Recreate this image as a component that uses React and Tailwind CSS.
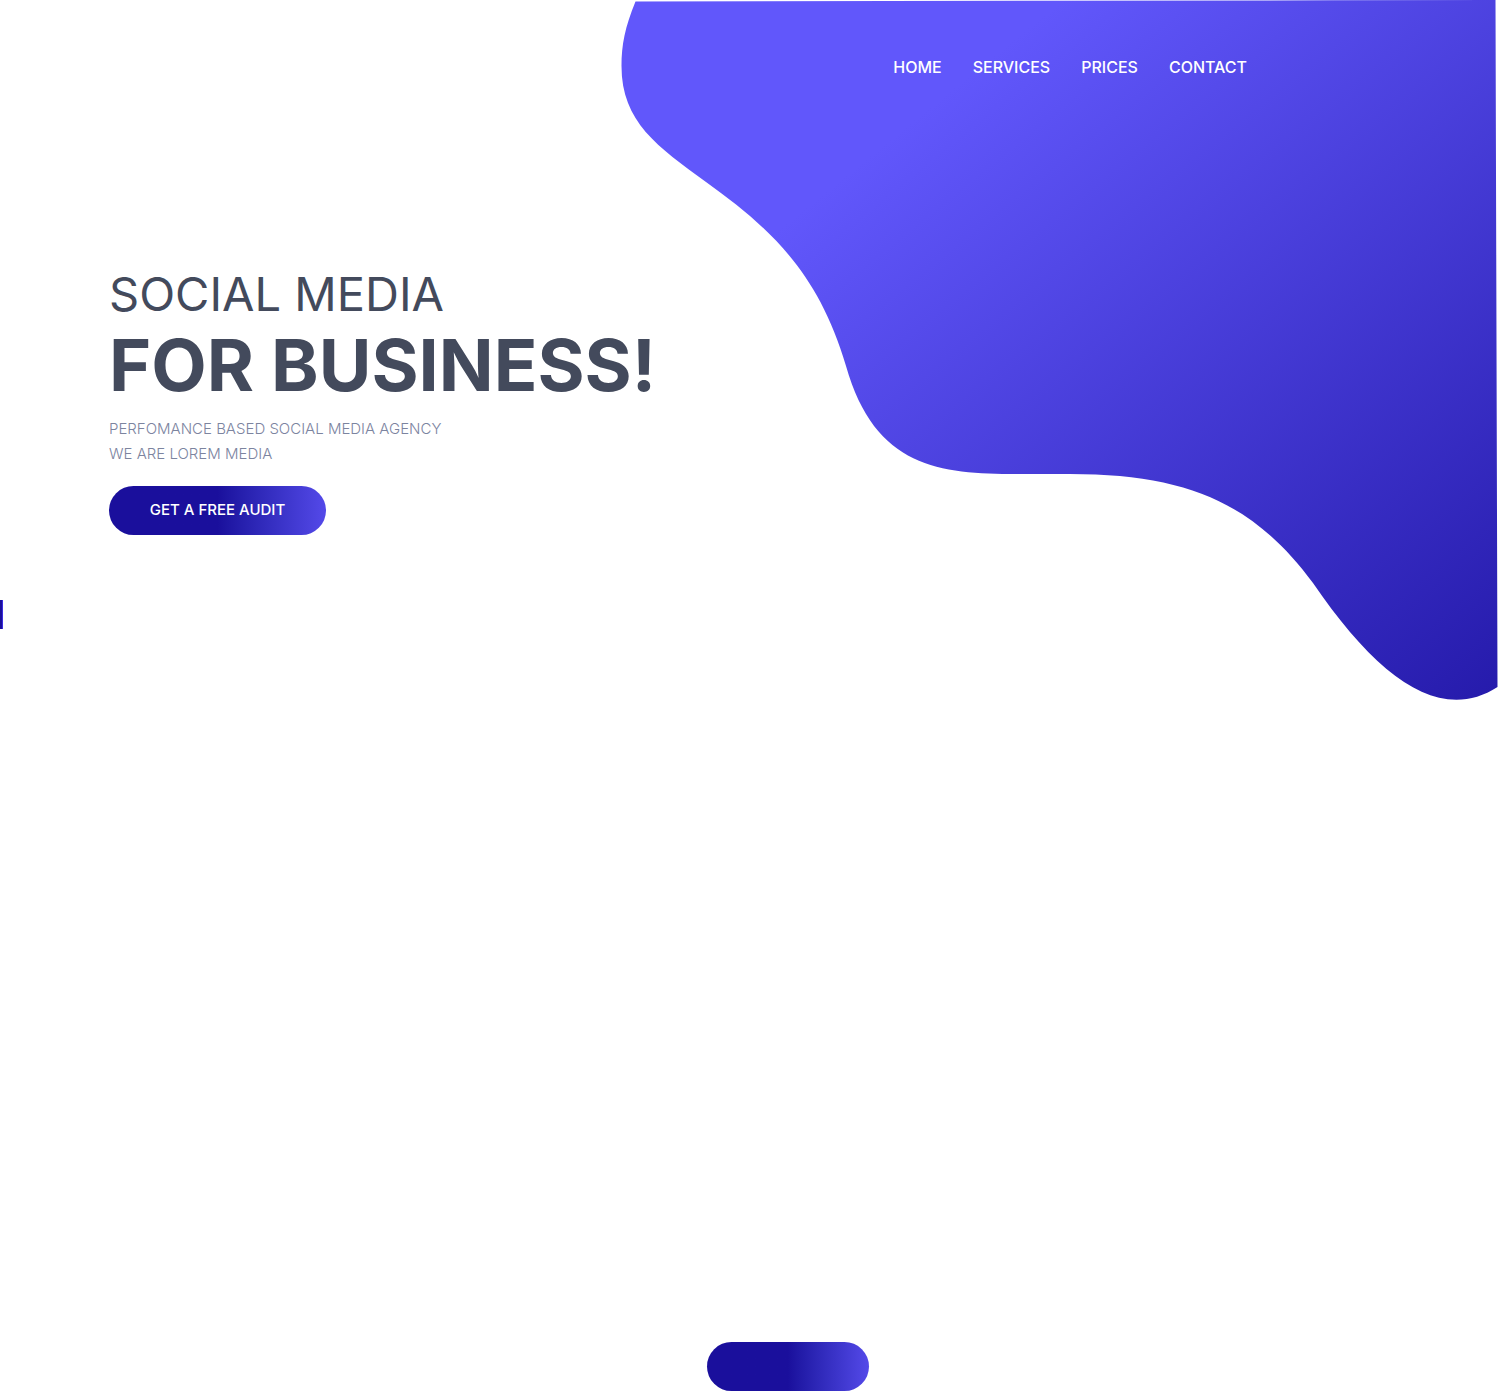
const links = ["HOME", "SERVICES", "PRICES", "CONTACT"];

function Blob() {
  return (
    <svg
      aria-hidden="true"
      viewBox="620 0 878 702"
      className="absolute top-0 right-0 -z-10 w-[878px]"
    >
      <defs>
        <linearGradient id="blob" gradientUnits="userSpaceOnUse" x1="420" y1="520" x2="1032" y2="1277">
          <stop stopColor="#6157fb" />
          <stop offset="1" stopColor="#1a0f9c" />
        </linearGradient>
      </defs>
      <path
        fill="url(#blob)"
        d="M635.500 1.5C625 27 621.5 45 621.5 66C621.5 122 658 147 706 182C767 226 818 270 846 366C875 468 940 474 1017 474H1070C1190 474 1255 505 1313 583C1378 678 1440 724 1497.500 687L1495.500 0L1330 0.300Z"
      />
    </svg>
  );
}

export default function App() {
  return (
    <div className="relative isolate flex min-h-screen flex-col overflow-hidden bg-white font-['Inter',sans-serif] text-[#434a5c]">
      <Blob />
      <header className="flex justify-end pt-[55px] pr-[251px]">
        <nav className="flex gap-[31px] text-base leading-6 font-medium text-white">
          {links.map((name) => (
            <a key={name} href={"#" + name.toLowerCase()}>
              {name}
            </a>
          ))}
        </nav>
      </header>

      <main className="flex flex-1 flex-col">
        <section className="flex flex-col items-start pt-[179px] pl-[109px]">
          <h1 className="flex flex-col">
            <span className="text-[47px] leading-[72px] font-normal">SOCIAL MEDIA</span>
            <span className="text-7xl leading-[70px] font-bold">FOR BUSINESS!</span>
          </h1>
          <p className="mt-4 text-[15px] leading-[25px] font-light text-[#7c849f]">
            PERFOMANCE BASED SOCIAL MEDIA AGENCY
            <br />
            WE ARE LOREM MEDIA
          </p>
          <button
            type="button"
            className="mt-5 h-[49px] w-[217px] rounded-full bg-linear-to-r from-[#1a0f9c] from-50% to-[#5449e9] text-[15px] font-medium text-white"
          >
            GET A FREE AUDIT
          </button>
        </section>

        <button
          type="button"
          aria-label="Open panel"
          className="mt-[65px] h-[29px] w-[3px] border-r border-[#3a2be0] bg-[#1a0f9c]"
        />

        <button
          type="button"
          aria-label="Send"
          className="mt-auto ml-[707px] h-[49px] w-[162px] rounded-full bg-linear-to-r from-[#1a0f9c] from-50% to-[#5449e9]"
        />
      </main>
    </div>
  );
}
